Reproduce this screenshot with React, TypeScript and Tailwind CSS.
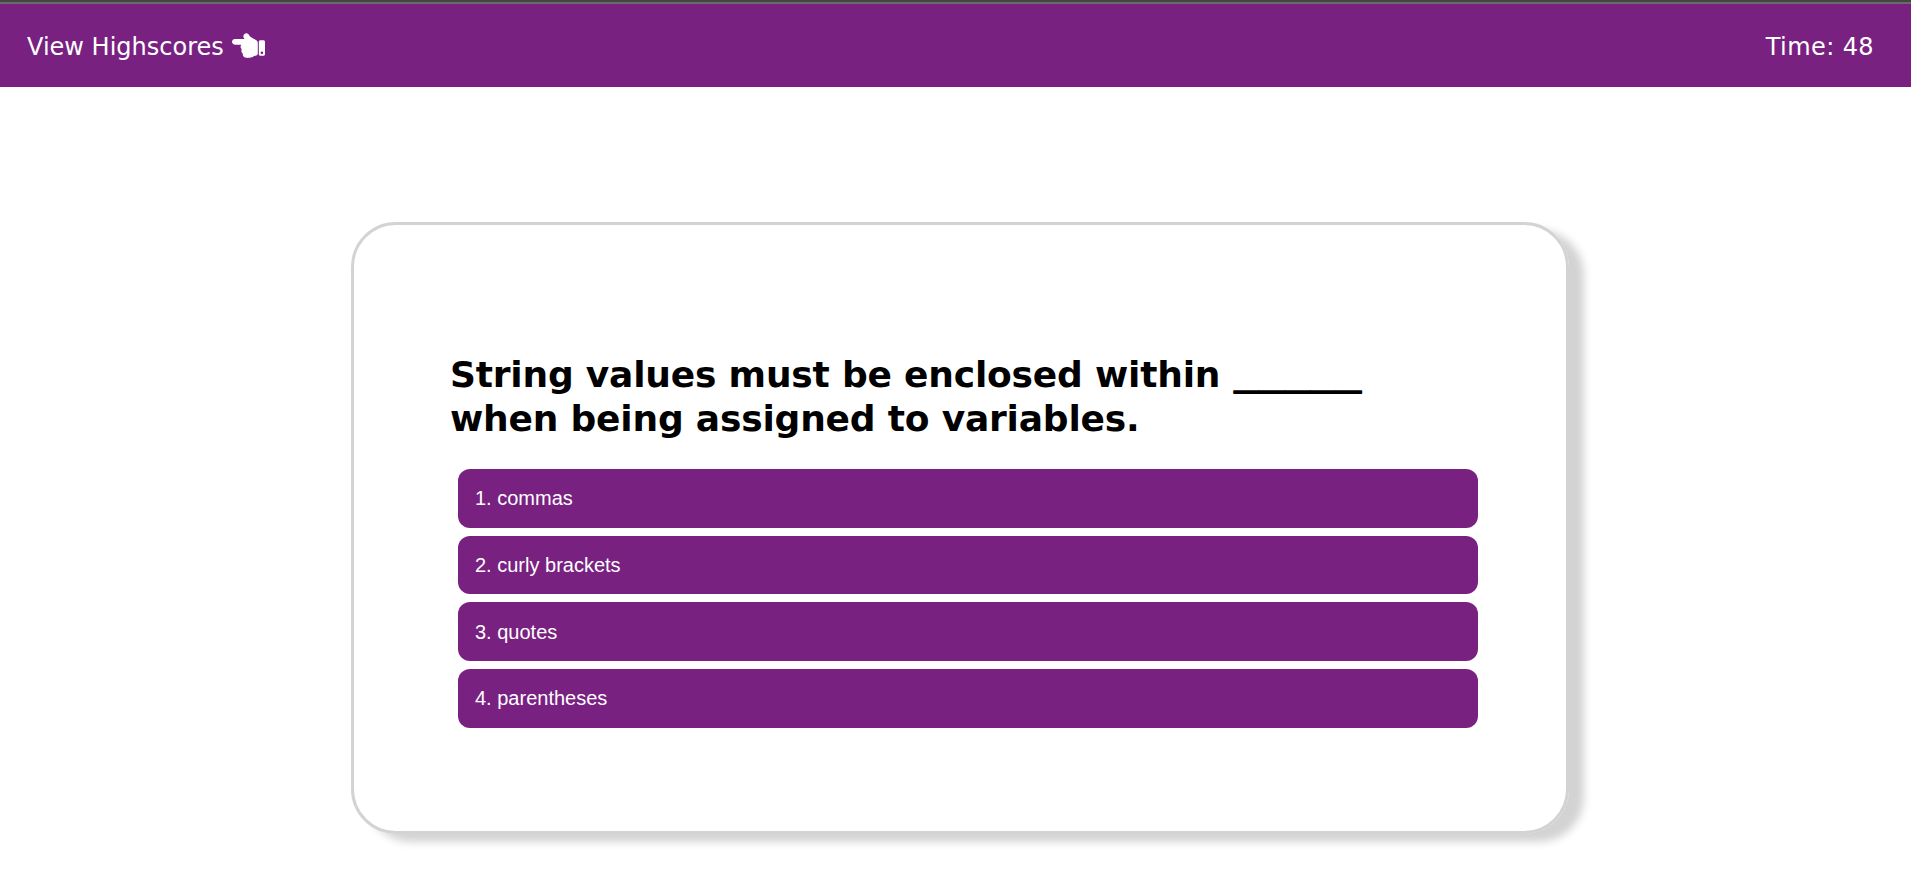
import { FaHandPointLeft } from "react-icons/fa";

const answers = ["1. commas", "2. curly brackets", "3. quotes", "4. parentheses"];

export default function App() {
  return (
    <div className="h-[877px] overflow-hidden bg-white text-black">
      <header className="flex h-[87px] items-center justify-between border-t-2 border-[#444444] bg-[#792181] pl-[27px] pr-[37px] font-['DejaVu_Sans',sans-serif] text-[24px] leading-[30px] text-white shadow-[inset_0_2px_0_#6a6a6a]">
        <a className="flex items-center gap-[8px]">
          <span className="pt-[5px]">View Highscores</span>
          <FaHandPointLeft className="mt-0.5 size-[33px]" />
        </a>
        <span className="pt-[5px] tracking-[0.4px]">Time: 48</span>
      </header>
      <main className="ml-[351px] mt-[135px] h-[612px] w-[1218px] rounded-[45px] border-[3px] border-[#d3d3d3] pl-24 pt-[128px] shadow-[15px_8px_8px_#d3d3d3]">
        <h1 className="h-[88px] w-[1034px] font-['DejaVu_Sans',sans-serif] text-[36px] font-bold leading-[44px] tracking-[-0.19px]">
          String values must be enclosed within{" "}
          <span className="ml-px align-[1px] font-['Liberation_Sans',sans-serif] text-[46px] leading-[0] tracking-normal [text-shadow:0_1px_0_#000,0_2px_0_#000]">
            _____
          </span>
          <br />
          when being assigned to variables.
        </h1>
        <ol className="ml-2 mt-[28px] flex w-[1020px] flex-col gap-2">
          {answers.map((answer) => (
            <li key={answer}>
              <button className="block h-[58.67px] w-full rounded-[12px] bg-[#792181] pl-[17px] text-left font-['Liberation_Sans',sans-serif] text-[20px] text-white">
                {answer}
              </button>
            </li>
          ))}
        </ol>
      </main>
    </div>
  );
}
